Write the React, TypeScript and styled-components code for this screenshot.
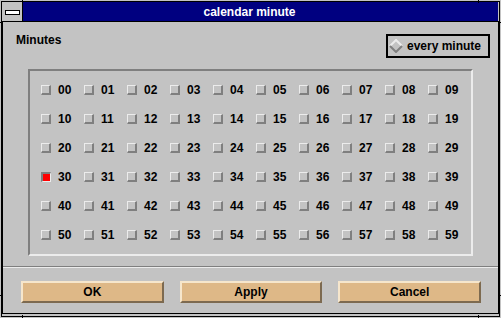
import React, { useState } from "react";
import styled, { createGlobalStyle } from "styled-components";

const GlobalStyle = createGlobalStyle`
  html, body {
    margin: 0;
    padding: 0;
    background: #c3c3c3;
  }
  body {
    font-family: "Liberation Sans", Arial, sans-serif;
  }
`;

const Window = styled.div`
  position: relative;
  width: 501px;
  height: 318px;
  box-sizing: border-box;
  padding: 1px;
  background: #c3c3c3;
`;

const Frame = styled.div`
  display: flex;
  flex-direction: column;
  height: 100%;
  box-sizing: border-box;
  border: 1px solid #000;
`;

const TitleBar = styled.div`
  display: flex;
  height: 20px;
  box-sizing: border-box;
  border-bottom: 1px solid #000;
`;

const MenuButton = styled.div`
  display: flex;
  align-items: center;
  justify-content: center;
  width: 21px;
  box-sizing: border-box;
  border-right: 1px solid #000;
  background: #c3c3c3;
`;

const MenuBar = styled.div`
  width: 13px;
  height: 3px;
  margin-top: 2px;
  background: #fff;
  border: 1px solid #000;
`;

const Title = styled.div`
  flex: 1;
  display: flex;
  align-items: center;
  justify-content: center;
  background: #000080;
  color: #fff;
  font-weight: bold;
  font-size: 12px;
  padding-right: 22px;
  margin-right: 1px;
`;

const ContentOuter = styled.div`
  flex: 1;
  display: flex;
  padding: 0 0 2px 0;
`;

const Panel = styled.div`
  flex: 1;
  display: flex;
  flex-direction: column;
  border: 1px solid #000;
  border-top: none;
`;

const Header = styled.div`
  display: flex;
  justify-content: space-between;
  align-items: flex-start;
  margin-top: 12px;
  padding: 0 8px 0 13px;
  height: 24px;
`;

const Label = styled.div`
  margin-top: -1px;
  font-weight: bold;
  font-size: 12px;
  line-height: 14px;
  color: #000;
`;

const EveryButton = styled.div`
  display: flex;
  align-items: center;
  gap: 4px;
  width: 104px;
  height: 24px;
  box-sizing: border-box;
  border: 2px solid #000;
  padding-left: 1px;
  font-weight: bold;
  font-size: 12px;
  color: #000;
  cursor: pointer;
`;

const GridFrame = styled.div`
  margin: 11px 25px 0 25px;
  height: 187px;
  box-sizing: border-box;
  border-style: solid;
  border-width: 2px;
  border-color: #7f7f7f #ececec #ececec #7f7f7f;
  display: grid;
  grid-template-columns: repeat(9, 43px) 1fr;
  grid-auto-rows: 29px;
  padding: 4px 0 0 11px;
`;

const Cell = styled.div`
  display: flex;
  align-items: center;
  gap: 7px;
  cursor: pointer;
  font-weight: bold;
  font-size: 12px;
  color: #000;
`;

const Check = styled.span<{ $on: boolean }>`
  width: 10px;
  height: 10px;
  box-sizing: border-box;
  border-style: solid;
  border-width: ${(p) => (p.$on ? "2px 1px 1px 2px" : "1px 2px 2px 1px")};
  border-color: ${(p) =>
    p.$on
      ? "#7f7f7f #ececec #ececec #7f7f7f"
      : "#ececec #7f7f7f #7f7f7f #ececec"};
  background: ${(p) => (p.$on ? "#ff0000" : "#c3c3c3")};
`;

const Separator = styled.div`
  margin-top: 10px;
  height: 0;
  border-top: 1px solid #7f7f7f;
  border-bottom: 1px solid #ececec;
`;

const ButtonRow = styled.div`
  display: flex;
  gap: 16px;
  margin-top: 13px;
  padding: 0 17px 0 18px;
`;

const Button = styled.button`
  flex: 1;
  height: 22px;
  box-sizing: border-box;
  border-style: solid;
  border-width: 2px;
  border-color: #f6e6cc #7d6a50 #7d6a50 #f6e6cc;
  background: #deb887;
  font-family: "Liberation Sans", Arial, sans-serif;
  font-weight: bold;
  font-size: 12px;
  color: #000;
  padding: 0;
  cursor: pointer;
`;

const Tick = styled.span<{ $v: boolean }>`
  position: absolute;
  background: #000;
  width: ${(p) => (p.$v ? "1px" : "3px")};
  height: ${(p) => (p.$v ? "3px" : "1px")};
`;

const Diamond = () => (
  <svg width="14" height="14" viewBox="0 0 14 14">
    <polygon points="7,1 13,7 7,13 1,7" fill="#c3c3c3" />
    <polyline points="1,7 7,1 13,7" fill="none" stroke="#ececec" strokeWidth="2" />
    <polyline points="1,7 7,13 13,7" fill="none" stroke="#7f7f7f" strokeWidth="2" />
  </svg>
);

const App = () => {
  const [selected, setSelected] = useState<number[]>([30]);

  const toggle = (n: number) => {
    setSelected((s) => (s.includes(n) ? s.filter((x) => x !== n) : [...s, n]));
  };

  const minutes = Array.from({ length: 60 }, (_, i) => i);

  return (
    <>
      <GlobalStyle />
      <Window>
        <Frame>
          <TitleBar>
            <MenuButton>
              <MenuBar />
            </MenuButton>
            <Title>calendar minute</Title>
          </TitleBar>
          <ContentOuter>
            <Panel>
              <Header>
                <Label>Minutes</Label>
                <EveryButton onClick={() => setSelected(minutes)}>
                  <Diamond />
                  every minute
                </EveryButton>
              </Header>
              <GridFrame>
                {minutes.map((m) => (
                  <Cell key={m} onClick={() => toggle(m)}>
                    <Check $on={selected.includes(m)} />
                    {String(m).padStart(2, "0")}
                  </Cell>
                ))}
              </GridFrame>
              <Separator />
              <ButtonRow>
                <Button>OK</Button>
                <Button>Apply</Button>
                <Button>Cancel</Button>
              </ButtonRow>
            </Panel>
          </ContentOuter>
        </Frame>
        <Tick $v style={{ left: 22, top: 0 }} />
        <Tick $v style={{ left: 478, top: 0 }} />
        <Tick $v style={{ left: 22, bottom: 0 }} />
        <Tick $v style={{ left: 478, bottom: 0 }} />
        <Tick $v={false} style={{ left: 0, top: 22 }} />
        <Tick $v={false} style={{ right: 0, top: 22 }} />
        <Tick $v={false} style={{ left: 0, top: 295 }} />
        <Tick $v={false} style={{ right: 0, top: 295 }} />
      </Window>
    </>
  );
};

export default App;
